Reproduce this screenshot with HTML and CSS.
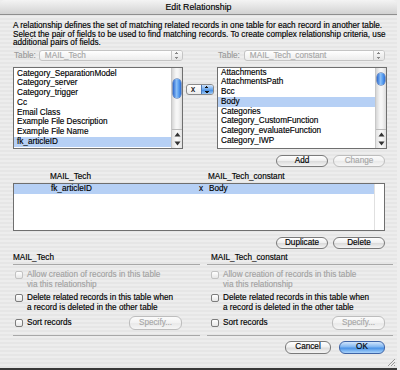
FILE: index.html
```html
<!DOCTYPE html>
<html lang="en">
  <head>
    <meta charset="UTF-8" />
    <title>Edit Relationship</title>
    <link rel="stylesheet" href="styles.css">
  </head>
  <body>
    <div class="window">
      <div class="titlebar">Edit Relationship</div>
      <div class="content">
        <p class="intro">
          A relationship defines the set of matching related records in one table for each record in another table.<br />
          Select the pair of fields to be used to find matching records. To create complex relationship criteria, use<br />
          additional pairs of fields.
        </p>

        <div class="pickers">
          <div class="table-row">
            <span class="dim">Table:</span>
            <div class="popup disabled left-popup">MAIL_Tech<span class="arrows"></span></div>
          </div>
          <div></div>
          <div class="table-row right">
            <span class="dim">Table:</span>
            <div class="popup disabled right-popup">MAIL_Tech_constant<span class="arrows"></span></div>
          </div>

          <div class="listbox">
            <ul class="items">
              <li>Category_SeparationModel</li>
              <li>Category_server</li>
              <li>Category_trigger</li>
              <li>Cc</li>
              <li>Email Class</li>
              <li>Example File Description</li>
              <li>Example File Name</li>
              <li class="selected">fk_articleID</li>
            </ul>
            <div class="scrollbar">
              <div class="thumb left-thumb"></div>
              <div class="steppers">
                <svg width="7" height="5" viewBox="0 0 7 5"><path d="M3.5 0.5 L6.5 4.5 L0.5 4.5 Z" fill="#333"/></svg>
                <svg width="7" height="5" viewBox="0 0 7 5"><path d="M0.5 0.5 L6.5 0.5 L3.5 4.5 Z" fill="#333"/></svg>
              </div>
            </div>
          </div>

          <div class="operator">
            <div class="popup op-popup">x<span class="arrows blue"></span></div>
          </div>

          <div class="listbox">
            <ul class="items shifted">
              <li>Attachments</li>
              <li>AttachmentsPath</li>
              <li>Bcc</li>
              <li class="selected">Body</li>
              <li>Categories</li>
              <li>Category_CustomFunction</li>
              <li>Category_evaluateFunction</li>
              <li>Category_IWP</li>
            </ul>
            <div class="scrollbar">
              <div class="thumb right-thumb"></div>
              <div class="steppers">
                <svg width="7" height="5" viewBox="0 0 7 5"><path d="M3.5 0.5 L6.5 4.5 L0.5 4.5 Z" fill="#333"/></svg>
                <svg width="7" height="5" viewBox="0 0 7 5"><path d="M0.5 0.5 L6.5 0.5 L3.5 4.5 Z" fill="#333"/></svg>
              </div>
            </div>
          </div>
        </div>

        <div class="button-row">
          <button class="btn wide">Add</button>
          <button class="btn wide" disabled>Change</button>
        </div>

        <div class="rel-header">
          <span class="rel-left">MAIL_Tech</span>
          <span class="rel-op"></span>
          <span>MAIL_Tech_constant</span>
        </div>
        <div class="rel-box">
          <div class="rel-rows">
            <div class="rel-row selected">
              <span class="rel-left">fk_articleID</span>
              <span class="rel-op">x</span>
              <span>Body</span>
            </div>
          </div>
          <div class="rel-scroll"></div>
        </div>

        <div class="button-row">
          <button class="btn wide">Duplicate</button>
          <button class="btn wide">Delete</button>
        </div>

        <div class="groups">
          <div class="group">
            <div class="group-title">MAIL_Tech</div>
            <div class="group-body">
              <label class="check disabled"><span class="box"></span><span>Allow creation of records in this table<br />via this relationship</span></label>
              <label class="check"><span class="box"></span><span>Delete related records in this table when<br />a record is deleted in the other table</span></label>
              <div class="sort-row">
                <label class="check"><span class="box"></span><span>Sort records</span></label>
                <button class="btn specify" disabled>Specify...</button>
              </div>
            </div>
          </div>
          <div class="group">
            <div class="group-title">MAIL_Tech_constant</div>
            <div class="group-body">
              <label class="check disabled"><span class="box"></span><span>Allow creation of records in this table<br />via this relationship</span></label>
              <label class="check"><span class="box"></span><span>Delete related records in this table when<br />a record is deleted in the other table</span></label>
              <div class="sort-row">
                <label class="check"><span class="box"></span><span>Sort records</span></label>
                <button class="btn specify" disabled>Specify...</button>
              </div>
            </div>
          </div>
        </div>

        <div class="footer">
          <button class="btn">Cancel</button>
          <button class="btn default">OK</button>
        </div>
      </div>
      <svg class="grip" width="9" height="9" viewBox="0 0 9 9">
        <path d="M8 1 L1 8 M8 4 L4 8 M8 7 L7 8" stroke="#999" stroke-width="1"/>
      </svg>
    </div>
  </body>
</html>
```

FILE: styles.css
```css
body {
  margin: 0;
  background: #eeeeee;
  font-family: "Liberation Sans", Arial, sans-serif;
  font-size: 8.2px;
  color: #000;
  -webkit-text-stroke: 0.15px currentColor;
}
.window {
  position: relative;
  width: 397px;
  height: 368px;
  border-bottom: 2px solid #3a3a3a;
  border-radius: 5px 5px 0 0;
  overflow: hidden;
  background: repeating-linear-gradient(to bottom, #ededed 0, #ededed 2px, #e6e6e6 2px, #e6e6e6 4px);
}
.titlebar {
  height: 14px;
  line-height: 14px;
  text-align: center;
  font-size: 8.8px;
  background: linear-gradient(#f4f4f4, #d2d2d2);
  border-bottom: 1px solid #8e8e8e;
}
.content {
  padding: 0 10px 0 13px;
}
.intro {
  margin: 7px 0 0 0;
  font-size: 8.2px;
  line-height: 8.5px;
  white-space: nowrap;
}
.pickers {
  display: grid;
  grid-template-columns: 170px 34px 170px;
  margin-top: 3px;
}
.table-row {
  display: flex;
  align-items: center;
  gap: 3px;
  height: 10px;
  padding-left: 1px;
}
.table-row.right {
  justify-content: flex-end;
  padding-right: 2px;
  gap: 4px;
}
.dim {
  color: #9a9a9a;
}
.popup {
  position: relative;
  height: 9px;
  line-height: 9px;
  border: 1px solid #8a8a8a;
  border-radius: 3px;
  background: linear-gradient(#ffffff, #ececec);
  padding-left: 5px;
  box-sizing: content-box;
}
.popup.disabled {
  color: #a6a6a6;
  border-color: #c4c4c4;
}
.left-popup {
  width: 139px;
}
.right-popup {
  width: 137px;
}
.arrows {
  position: absolute;
  top: 0;
  right: 0;
  width: 10px;
  height: 9px;
  border-left: 1px solid #c4c4c4;
  border-radius: 0 2px 2px 0;
  background:
    linear-gradient(135deg, transparent 50%, #888 50%) 3px 1px / 2px 2px no-repeat,
    linear-gradient(225deg, transparent 50%, #888 50%) 5px 1px / 2px 2px no-repeat,
    linear-gradient(45deg, transparent 50%, #888 50%) 3px 6px / 2px 2px no-repeat,
    linear-gradient(315deg, transparent 50%, #888 50%) 5px 6px / 2px 2px no-repeat,
    linear-gradient(#fafafa, #e4e4e4);
}
.arrows.blue {
  width: 11px;
  border-left-color: #4d79b8;
  background:
    linear-gradient(135deg, transparent 50%, #111 50%) 3px 1px / 2px 2px no-repeat,
    linear-gradient(225deg, transparent 50%, #111 50%) 5px 1px / 2px 2px no-repeat,
    linear-gradient(45deg, transparent 50%, #111 50%) 3px 6px / 2px 2px no-repeat,
    linear-gradient(315deg, transparent 50%, #111 50%) 5px 6px / 2px 2px no-repeat,
    linear-gradient(#cfe3fb, #6aa7ec 50%, #3d86e0 51%, #9cc9f6);
}
.listbox {
  display: flex;
  height: 80px;
  margin-top: 6px;
  border: 1px solid #6f6f6f;
  background: #fff;
  overflow: hidden;
}
.items {
  flex: 1;
  list-style: none;
  margin: 0;
  padding: 1px 0 0 0;
}
.items.shifted {
  margin-top: -1px;
}
.items li {
  height: 9.8px;
  line-height: 9.8px;
  padding-left: 3px;
  white-space: nowrap;
}
.items li.selected {
  background: #b6d0f5;
}
.scrollbar {
  position: relative;
  width: 10px;
  border-left: 1px solid #c8c8c8;
  background: linear-gradient(to right, #d6d6d6, #f6f6f6 40%, #f6f6f6 60%, #dcdcdc);
}
.thumb {
  position: absolute;
  left: 1px;
  width: 8px;
  border-radius: 4px;
  background: linear-gradient(to right, #2d6ad0, #8cc0f7 45%, #5a9ff0 70%, #2e70d6);
  box-shadow: 0 0 0 0.5px #33589a;
}
.left-thumb {
  top: 11px;
  height: 19px;
}
.right-thumb {
  top: 5px;
  height: 12px;
}
.steppers {
  position: absolute;
  left: 0;
  right: 0;
  bottom: 0;
  height: 18px;
  display: flex;
  flex-direction: column;
  align-items: center;
  justify-content: space-around;
  border-top: 1px solid #bbb;
  background: linear-gradient(to right, #e2e2e2, #fbfbfb 50%, #e2e2e2);
}
.operator {
  display: flex;
  justify-content: center;
  padding-top: 23px;
}
.op-popup {
  width: 22px;
  height: 9px;
  padding-left: 4px;
}
.button-row {
  display: flex;
  justify-content: flex-end;
  gap: 5px;
  margin-top: 6px;
  padding-right: 2px;
}
.btn {
  height: 12px;
  padding: 0;
  font-family: inherit;
  font-size: 8.2px;
  line-height: 10px;
  color: #000;
  border: 1px solid #7a7a7a;
  border-radius: 6px;
  background: linear-gradient(#ffffff, #f0f0f0 45%, #dcdcdc 55%, #f4f4f4);
}
.btn:disabled {
  color: #a8a8a8;
  border-color: #bdbdbd;
  background: linear-gradient(#fbfbfb, #f2f2f2 50%, #e9e9e9 55%, #f6f6f6);
}
.btn.wide {
  width: 52px;
}
.rel-header {
  display: flex;
  height: 10px;
  line-height: 10px;
  margin-top: 5px;
}
.rel-left {
  width: 185px;
  padding-left: 37px;
  box-sizing: border-box;
}
.rel-op {
  width: 10px;
}
.rel-box {
  display: flex;
  height: 46px;
  margin-top: 1px;
  margin-right: 2px;
  border: 1px solid #6f6f6f;
  background: #fff;
}
.rel-rows {
  flex: 1;
}
.rel-row {
  display: flex;
  height: 10px;
  line-height: 10px;
}
.rel-row.selected {
  background: #b6d0f5;
}
.rel-scroll {
  width: 9px;
  border-left: 1px solid #e0e0e0;
}
.groups {
  display: grid;
  grid-template-columns: 187px 186px;
  justify-content: space-between;
  margin: 4px -6px 0 0;
}
.group {
  border-bottom: 1px solid #a8a8a8;
  padding-bottom: 5px;
}
.group-title {
  height: 10px;
  line-height: 10px;
  padding-bottom: 1px;
  border-bottom: 1px solid #a8a8a8;
}
.group:last-child .group-title {
  padding-left: 4px;
}
.group-body {
  display: flex;
  flex-direction: column;
  gap: 3px;
  padding: 5px 0 0 2px;
}
.group:last-child .group-body {
  padding-left: 4px;
}
.check {
  display: flex;
  align-items: flex-start;
  gap: 4px;
  line-height: 10px;
  white-space: nowrap;
}
.check.disabled {
  color: #a2a2a2;
}
.box {
  flex: none;
  width: 8px;
  height: 8px;
  margin-top: 1px;
  box-sizing: border-box;
  border: 1px solid #7c7c7c;
  border-radius: 2px;
  background: linear-gradient(#ffffff, #e6e6e6);
}
.check.disabled .box {
  border-color: #c2c2c2;
}
.sort-row {
  display: flex;
  justify-content: space-between;
  align-items: center;
}
.btn.specify {
  width: 53px;
  height: 14px;
  margin-right: 18px;
}
.group:last-child .btn.specify {
  margin-right: 8px;
}
.footer {
  display: flex;
  justify-content: flex-end;
  gap: 8px;
  margin-top: 5px;
  padding-right: 2px;
}
.footer .btn {
  width: 46px;
  height: 13px;
}
.btn.default {
  border-color: #3f64a6;
  background: linear-gradient(#d2e6fc, #7fb5f1 45%, #4a92e6 55%, #a9d3fb);
}
.grip {
  position: absolute;
  right: 1px;
  bottom: 1px;
}
```
